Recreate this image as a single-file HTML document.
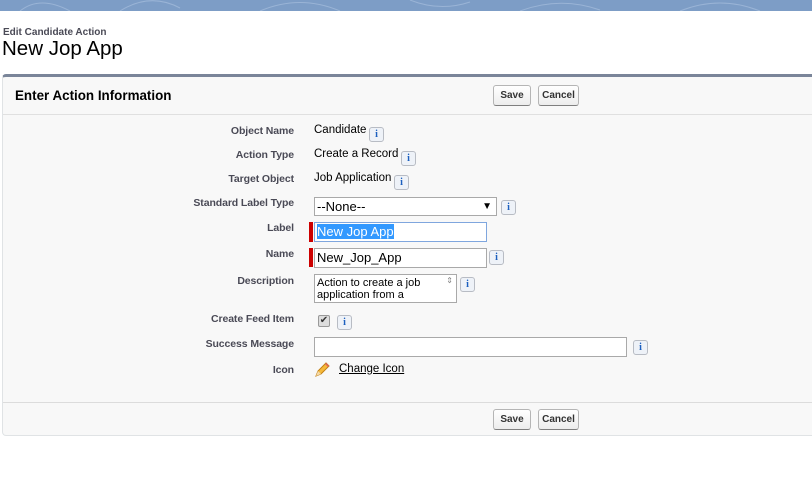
<!DOCTYPE html>
<html><head><style>
*{margin:0;padding:0;box-sizing:border-box}
body{width:812px;height:495px;background:#fff;font-family:"Liberation Sans",Arial,sans-serif;position:relative;overflow:hidden}
.a{position:absolute}
.lbl{position:absolute;right:518px;font-size:10.5px;font-weight:bold;color:#4a4a56;white-space:nowrap;letter-spacing:-0.1px}
.val{position:absolute;left:314px;font-size:11.5px;color:#000;white-space:nowrap}
.i{position:absolute;width:15px;height:15px;border:1px solid #b8bcc4;border-radius:3px;background:#eef2f8;color:#1c5fbf;font-size:10px;font-weight:bold;text-align:center;line-height:13px;font-family:"Liberation Serif",serif}
.btn{position:absolute;height:21px;border:1px solid #b5b5b5;border-bottom-color:#7f7f7f;border-radius:3px;background:linear-gradient(#fff,#ededed);font-size:10px;font-weight:bold;color:#333;text-align:center;line-height:19px}
.inp{position:absolute;border:1px solid #a9a9a9;background:#fff;font-size:13px;padding-left:2px}
</style></head><body>
<div class="a" style="left:0;top:0;width:812px;height:11px;background:#7d9dc6"></div>
<svg class="a" style="left:0;top:0" width="812" height="11"><g fill="none" stroke="#9ab4d6" stroke-width="1"><path d="M20 11 Q40 -5 70 11"/><path d="M120 11 Q150 -8 180 8"/><path d="M260 11 Q300 -6 340 11"/><path d="M410 0 Q440 12 470 2"/><path d="M520 11 Q560 -4 600 10"/><path d="M680 11 Q720 -5 760 11"/></g></svg>
<div class="a" style="left:3px;top:27px;font-size:10px;font-weight:bold;color:#4a4a56">Edit Candidate Action</div>
<div class="a" style="left:2px;top:37px;font-size:20.5px;color:#000">New Jop App</div>
<div class="a" style="left:2px;top:74px;width:812px;height:362px;background:#f8f8f8;border:1px solid #e0e3e5;border-top:3px solid #7a8599;border-radius:4px 0 0 4px"></div>
<div class="a" style="left:3px;top:114px;width:809px;height:1px;background:#e0e0e0"></div>
<div class="a" style="left:3px;top:402px;width:809px;height:1px;background:#dcdcdc"></div>
<div class="a" style="left:15px;top:88px;font-size:13.4px;font-weight:bold;color:#000">Enter Action Information</div>
<div class="btn" style="left:493px;top:85px;width:38px">Save</div>
<div class="btn" style="left:538px;top:85px;width:41px">Cancel</div>
<div class="btn" style="left:493px;top:409px;width:38px">Save</div>
<div class="btn" style="left:538px;top:409px;width:41px">Cancel</div>

<div class="lbl" style="top:125px">Object Name</div>
<div class="lbl" style="top:149px">Action Type</div>
<div class="lbl" style="top:173px">Target Object</div>
<div class="lbl" style="top:197px">Standard Label Type</div>
<div class="lbl" style="top:222px">Label</div>
<div class="lbl" style="top:248px">Name</div>
<div class="lbl" style="top:275px">Description</div>
<div class="lbl" style="top:313px">Create Feed Item</div>
<div class="lbl" style="top:338px">Success Message</div>
<div class="lbl" style="top:364px">Icon</div>

<div class="val" style="top:124px">Candidate</div>
<div class="val" style="top:148px">Create a Record</div>
<div class="val" style="top:172px">Job Application</div>
<div class="i" style="left:369px;top:127px">i</div>
<div class="i" style="left:401px;top:151px">i</div>
<div class="i" style="left:394px;top:175px">i</div>

<div class="inp" style="left:314px;top:197px;width:183px;height:19px;line-height:17px">--None--<span style="position:absolute;right:4px;font-size:10px">▼</span></div>
<div class="i" style="left:501px;top:200px">i</div>
<div class="a" style="left:309px;top:222px;width:4px;height:20px;background:#c00"></div>
<div class="inp" style="left:314px;top:222px;width:173px;height:20px;border-color:#7fa6de;line-height:18px"><span style="background:#3399ff;color:#fff">New Jop App</span></div>
<div class="a" style="left:309px;top:248px;width:4px;height:19px;background:#c00"></div>
<div class="inp" style="left:314px;top:248px;width:173px;height:20px;line-height:18px">New_Jop_App</div>
<div class="i" style="left:489px;top:250px">i</div>
<div class="inp" style="left:314px;top:274px;width:143px;height:29px;font-size:11px;line-height:12px;padding-top:2px">Action to create a job<br>application from a<span style="position:absolute;right:3px;top:0;font-size:8px;color:#888">⇕</span></div>
<div class="i" style="left:460px;top:277px">i</div>
<div class="a" style="left:318px;top:315px;width:12px;height:12px;border:1px solid #999;border-radius:2px;background:#ddd;font-size:10px;line-height:10px;text-align:center;color:#333">✔</div>
<div class="i" style="left:337px;top:315px">i</div>
<div class="inp" style="left:314px;top:337px;width:313px;height:20px"></div>
<div class="i" style="left:633px;top:340px">i</div>
<svg class="a" style="left:314px;top:362px" width="16" height="16"><path d="M2 14 L4 9 L12 1 L15 4 L7 12 Z" fill="#f5b93a" stroke="#c27f12" stroke-width="1"/><path d="M2 14 L4 9 L7 12 Z" fill="#f4d9a8"/><path d="M12 1 L15 4 L14 5 L11 2Z" fill="#e06060"/></svg>
<div class="a" style="left:339px;top:363px;font-size:11.5px;color:#000;text-decoration:underline">Change Icon</div>
</body></html>
